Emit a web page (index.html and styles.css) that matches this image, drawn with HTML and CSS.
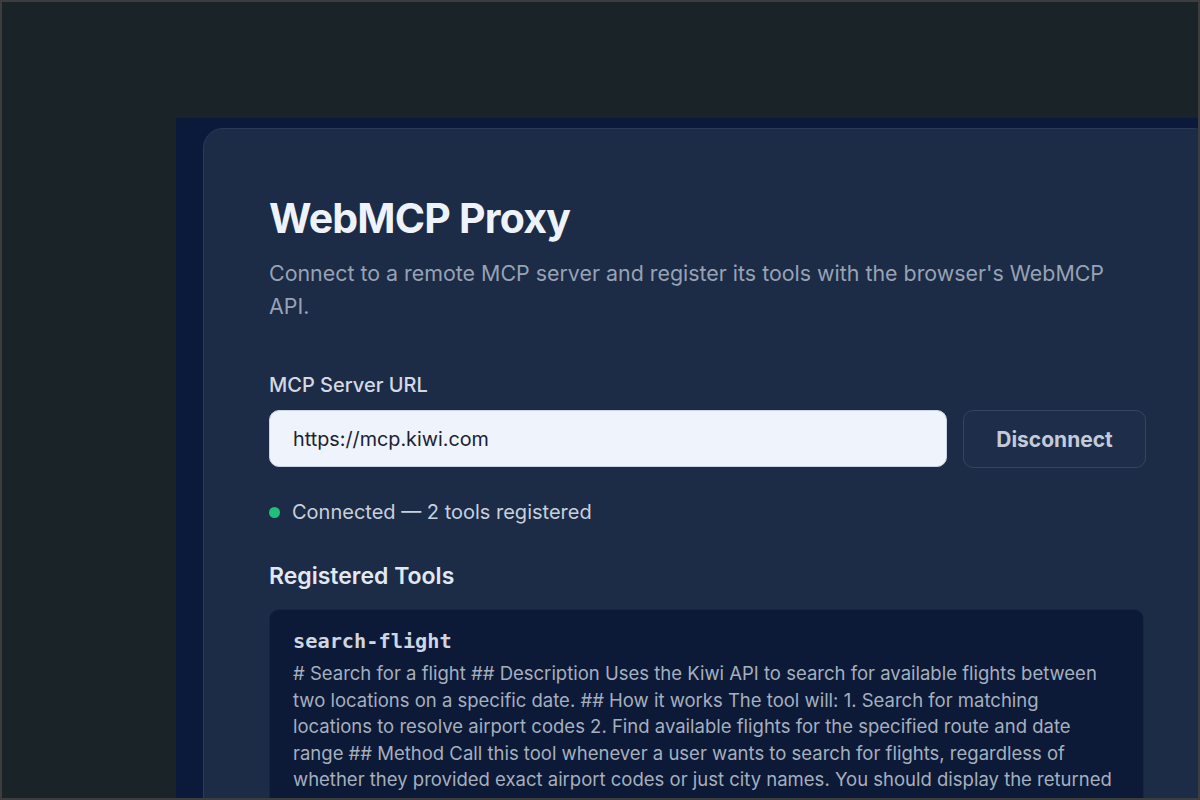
FILE: index.html
```html
<!DOCTYPE html>
<html lang="en">
<head>
<meta charset="utf-8">
<title>WebMCP Proxy</title>
<link rel="stylesheet" href="styles.css">
</head>
<body>
<div class="frame">
  <div class="viewport">
    <main class="card">
      <h1 class="title">WebMCP Proxy</h1>
      <p class="subtitle">Connect to a remote MCP server and register its tools with the browser's WebMCP API.</p>

      <label class="field-label" for="url">MCP Server URL</label>
      <div class="url-row">
        <input id="url" class="url-input" type="text" value="https://mcp.kiwi.com">
        <button class="btn-disconnect" type="button">Disconnect</button>
      </div>

      <div class="status">
        <span class="status-dot"></span>
        <span class="status-text">Connected — 2 tools registered</span>
      </div>

      <h2 class="section-title">Registered Tools</h2>
      <div class="tool">
        <div class="tool-name">search-flight</div>
        <p class="tool-desc"># Search for a flight ## Description Uses the Kiwi API to search for available flights between two locations on a specific date. ## How it works The tool will: 1. Search for matching locations to resolve airport codes 2. Find available flights for the specified route and date range ## Method Call this tool whenever a user wants to search for flights, regardless of whether they provided exact airport codes or just city names. You should display the returned results in a readable format. Format the results in a table with the most relevant details.</p>
      </div>
    </main>
  </div>
</div>
</body>
</html>
```
FILE: styles.css
```css
html, body {
  margin: 0;
  padding: 0;
  background: #1a2428;
}
.frame {
  box-sizing: border-box;
  width: 1200px;
  height: 800px;
  border: 2px solid #3c3d3e;
  background: #1a2428;
  padding: 116px 0 0 174px;
  overflow: hidden;
}
.viewport {
  height: 100%;
  background: #0b1a3b;
  padding: 10px 0 0 27px;
  box-sizing: border-box;
  overflow: hidden;
}
.card {
  box-sizing: border-box;
  width: 1010px;
  min-height: 800px;
  background: #1c2b46;
  border: 1px solid #2a3a57;
  border-radius: 20px;
  padding: 65px 65px;
  font-family: Inter, "Noto Sans", sans-serif;
}
.title {
  margin: 0 0 15px;
  font-size: 41px;
  line-height: 48px;
  font-weight: 700;
  letter-spacing: -0.8px;
  color: #eef3fb;
}
.subtitle {
  margin: 0 0 49px;
  font-size: 21.4px;
  line-height: 33px;
  color: #97a2b4;
}
.field-label {
  display: block;
  margin: 0 0 12px;
  font-size: 20px;
  line-height: 26px;
  font-weight: 500;
  color: #d3d9e3;
}
.url-row {
  display: flex;
  gap: 16px;
  align-items: flex-start;
}
.url-input {
  flex: 0 0 678px;
  box-sizing: border-box;
  height: 57px;
  border: 1px solid #c9d3e4;
  border-radius: 10px;
  background: #eef3fc;
  padding: 0 23px;
  font-family: Inter, "Noto Sans", sans-serif;
  font-size: 19.8px;
  color: #1b2233;
  outline: none;
}
.btn-disconnect {
  flex: 0 0 183px;
  box-sizing: border-box;
  height: 58px;
  border: 1px solid #35445f;
  border-radius: 10px;
  background: #1e2d49;
  font-family: Inter, "Noto Sans", sans-serif;
  font-size: 21px;
  font-weight: 700;
  color: #c3cbd8;
}
.status {
  display: flex;
  align-items: center;
  gap: 12px;
  margin: 31px 0 0 0;
}
.status-dot {
  width: 11px;
  height: 11px;
  border-radius: 50%;
  background: #1ec07a;
}
.status-text {
  font-size: 20px;
  line-height: 26px;
  color: #c9d0dc;
}
.section-title {
  margin: 36px 0 18px;
  font-size: 23px;
  line-height: 30px;
  font-weight: 600;
  color: #e2e8f1;
}
.tool {
  width: 875px;
  box-sizing: border-box;
  background: #0c1a38;
  border: 1px solid #15244a;
  border-radius: 10px;
  padding: 17px 23px;
}
.tool-name {
  font-family: "DejaVu Sans Mono", monospace;
  font-weight: 700;
  font-size: 20.3px;
  line-height: 28px;
  color: #cfd6e1;
  margin-bottom: 5px;
}
.tool-desc {
  margin: 0;
  font-size: 18.5px;
  line-height: 26.5px;
  color: #a6afbe;
}
```
